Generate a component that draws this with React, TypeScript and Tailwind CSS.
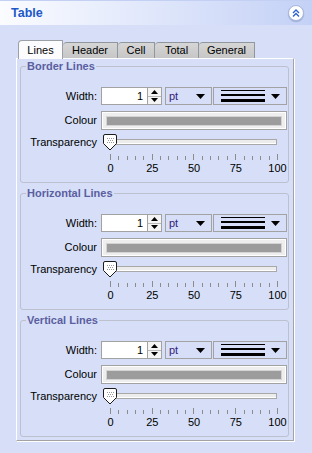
import React from 'react';

const tabs = [
  { label: 'Lines', w: 'w-[45px]' },
  { label: 'Header', w: 'w-[55px]' },
  { label: 'Cell', w: 'w-[37px]' },
  { label: 'Total', w: 'w-[44px]' },
  { label: 'General', w: 'w-[56px]' },
];

const groups = ['Border Lines', 'Horizontal Lines', 'Vertical Lines'];

function CollapseButton() {
  return (
    <div className="flex h-[16px] w-[16px] items-center justify-center rounded-full border border-[#a9b6d8] bg-white shadow-[0_1px_1px_rgba(90,110,170,0.4)]">
      <svg width="8" height="8" viewBox="0 0 8 8" fill="none" stroke="#2d62d0" strokeWidth="1.4">
        <path d="M1 4 L4 1 L7 4" />
        <path d="M1 7.5 L4 4.5 L7 7.5" />
      </svg>
    </div>
  );
}

function DownArrow() {
  return (
    <svg width="9" height="5" viewBox="0 0 9 5">
      <path d="M0 0 H9 L4.5 5 Z" fill="#000" />
    </svg>
  );
}

function Thumb() {
  return (
    <svg width="14" height="17" viewBox="0 0 14 17" className="block">
      <path d="M2 0.5 H12 Q13.5 0.5 13.5 2 V9.5 L7 16 L0.5 9.5 V2 Q0.5 0.5 2 0.5 Z" fill="#fff" stroke="#1c1c1c" />
      {[
        [4, 4], [6, 4], [8, 4], [10, 4],
        [5, 6], [7, 6], [9, 6],
        [4, 8], [6, 8], [8, 8], [10, 8],
      ].map(([x, y], i) => (
        <rect key={i} x={x} y={y} width="1" height="1" fill="#9a9a9a" />
      ))}
    </svg>
  );
}

function Group({ title }: { title: string }) {
  const ticks = Array.from({ length: 21 }, (_, i) => i);
  return (
    <fieldset className="mx-[3px] mr-[4px] rounded-[3px] border border-[#bcc0cf] pt-[14px] pb-[8px]">
      <legend className="ml-[5px] px-[1px] text-[11px] leading-[14px] font-bold text-[#5b5e9f]">{title}</legend>

      <div className="flex h-[18px] items-stretch">
        <div className="flex w-[77px] items-center justify-end pr-px">Width:</div>
        <div className="ml-[3px] flex w-[47px] items-center justify-end border border-[#a2a2a2] bg-white pr-[4px]">1</div>
        <div className="flex w-[14px] flex-col border border-l-0 border-[#a2a2a2] bg-[#f4f4f4]">
          <div className="flex flex-1 items-center justify-center border-b border-[#b8b8b8]">
            <svg width="7" height="4" viewBox="0 0 7 4"><path d="M0 4 H7 L3.5 0 Z" fill="#000" /></svg>
          </div>
          <div className="flex flex-1 items-center justify-center">
            <svg width="7" height="4" viewBox="0 0 7 4"><path d="M0 0 H7 L3.5 4 Z" fill="#000" /></svg>
          </div>
        </div>
        <div className="ml-[3px] flex w-[47px] items-center justify-between border border-[#a2a2a2] pr-[6px] pl-[3px] text-[#34207a]">
          <span>pt</span>
          <DownArrow />
        </div>
        <div className="ml-px flex w-[74px] items-center justify-between border border-[#a2a2a2] pr-[6px] pl-[7px]">
          <div className="flex w-[44px] flex-col">
            <div className="h-px bg-black" />
            <div className="mt-[3px] h-[2px] bg-black" />
            <div className="mt-[3px] h-[3px] bg-black" />
          </div>
          <DownArrow />
        </div>
      </div>

      <div className="mt-[6px] flex h-[19px] items-stretch">
        <div className="flex w-[77px] items-center justify-end pr-px">Colour</div>
        <div className="ml-[3px] flex w-[186px] items-center border border-[#a2a2a2] bg-[#eeeeee] px-[5px] shadow-[inset_0_0_0_1px_#ffffff]">
          <div className="h-[8px] flex-1 bg-[#9c9c9c] shadow-[0_0_0_1px_#d4d4d4]" />
        </div>
      </div>

      <div className="mt-[4px] flex h-[17px] items-stretch">
        <div className="flex w-[77px] items-center justify-end pr-px">Transparency</div>
        <div className="relative ml-[5px] w-[174px]">
          <div className="absolute top-[5px] right-0 left-[4px] h-[6px] border border-[#a8a8a8] bg-[#ececec] shadow-[inset_0_-1px_0_#ffffff]" />
          <div className="absolute top-0 left-0">
            <Thumb />
          </div>
        </div>
      </div>

      <div className="mt-[3px] ml-[89px] flex h-[6px] w-[168px] items-start justify-between">
        {ticks.map((t) => (
          <div key={t} className={t % 5 === 0 ? 'mt-0 h-[6px] w-px bg-[#8c8c8c]' : 'mt-[2px] h-[4px] w-px bg-[#8c8c8c]'} />
        ))}
      </div>

      <div className="mt-[2px] ml-[89px] flex h-[12px] w-[168px] items-center justify-between leading-[12px]">
        {['0', '25', '50', '75', '100'].map((l) => (
          <div key={l} className="flex w-px justify-center">
            <span>{l}</span>
          </div>
        ))}
      </div>
    </fieldset>
  );
}

export default function App() {
  return (
    <div className="h-[453px] w-[312px] overflow-hidden bg-[#d6dff7] font-['Liberation_Sans',Arial,sans-serif] text-[11px] text-black">
      <header className="flex h-[25px] items-center justify-between border-t border-[#c3d0f3] bg-linear-to-r from-[#fbfcff] to-[#c4d1f6] pr-[8px] pl-[11px]">
        <h1 className="text-[12.5px] font-bold text-[#2158c8]">Table</h1>
        <CollapseButton />
      </header>

      <div className="px-[16px] pt-[15px]">
        <div className="flex items-end pl-[2px]">
          {tabs.map((t, i) => (
            <div
              key={t.label}
              className={
                i === 0
                  ? `relative z-10 -mb-px flex h-[19px] ${t.w} items-center justify-center rounded-tl-[4px] rounded-tr-[1px] border border-b-0 border-[#9aa0a6] bg-[#fcfcfe] pt-px`
                  : `flex h-[16px] ${t.w} items-center justify-center rounded-tl-[4px] rounded-tr-[1px] border border-l-0 border-b-0 border-[#8f979c] bg-linear-to-b from-[#d6d6d6] to-[#c6c6c6]`
              }
            >
              {t.label}
            </div>
          ))}
        </div>
        <div className="flex h-[383px] w-[278px] flex-col gap-[3px] border border-t-white border-l-white border-r-[#a3a3a3] border-b-[#a3a3a3] shadow-[1px_1px_0_#ffffff]">
          {groups.map((g) => (
            <Group key={g} title={g} />
          ))}
        </div>
      </div>
    </div>
  );
}
